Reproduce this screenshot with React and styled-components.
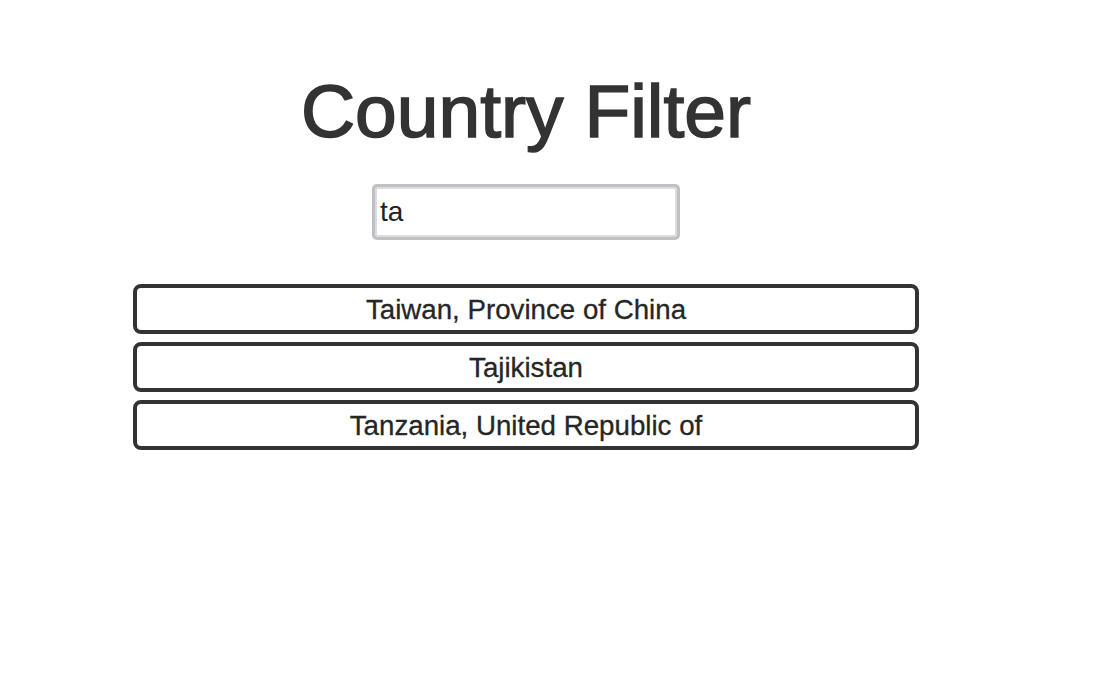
import React, { useState } from "react";
import styled, { createGlobalStyle } from "styled-components";

const GlobalStyle = createGlobalStyle`
  html, body {
    margin: 0;
    padding: 0;
    background: #ffffff;
  }
  body {
    font-family: "Liberation Sans", Arial, sans-serif;
    color: #333333;
  }
`;

const Page = styled.div`
  width: 1052px;
  display: flex;
  flex-direction: column;
  align-items: center;
`;

const Title = styled.h1`
  margin: 68px 0 0;
  font-size: 75px;
  font-weight: 400;
  line-height: 86px;
  color: #333333;
  -webkit-text-stroke: 1.6px #333333;
`;

const SearchInput = styled.input`
  box-sizing: border-box;
  margin-top: 33px;
  width: 302px;
  height: 50px;
  padding: 0 0 0 3px;
  border: 2px solid #dcdce0;
  border-radius: 2px;
  box-shadow: 0 0 0 3px #bfbfc4;
  outline: none;
  font-family: "Liberation Sans", Arial, sans-serif;
  font-size: 28px;
  color: #222222;
  background: #ffffff;
`;

const List = styled.ul`
  list-style: none;
  margin: 47px 0 0;
  padding: 0;
  display: flex;
  flex-direction: column;
  gap: 8px;
`;

const Item = styled.li`
  box-sizing: border-box;
  width: 786px;
  height: 50px;
  padding-top: 2px;
  border: 4.5px solid #333333;
  border-radius: 8px;
  display: flex;
  align-items: center;
  justify-content: center;
  font-size: 27.7px;
  color: #262626;
  -webkit-text-stroke: 0.3px #262626;
`;

const COUNTRIES = [
  "Taiwan, Province of China",
  "Tajikistan",
  "Tanzania, United Republic of",
  "Thailand",
  "Togo",
];

export default function App() {
  const [query, setQuery] = useState("ta");
  const q = query.toLowerCase();
  const results = COUNTRIES.filter((c) => c.toLowerCase().startsWith(q));
  return (
    <>
      <GlobalStyle />
      <Page>
        <Title>Country Filter</Title>
        <SearchInput value={query} onChange={(e) => setQuery(e.target.value)} />
        <List>
          {results.map((c) => (
            <Item key={c}>{c}</Item>
          ))}
        </List>
      </Page>
    </>
  );
}
